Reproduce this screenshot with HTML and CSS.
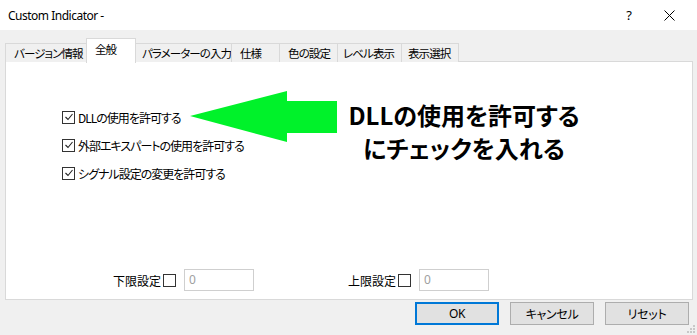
FILE: index.html
```html
<!DOCTYPE html>
<html lang="ja">
<head>
<meta charset="UTF-8">
<meta name="viewport" content="width=device-width, initial-scale=1.0">
<title>Custom Indicator</title>
<link rel="stylesheet" href="styles.css">
</head>
<body>
<div class="window">
  <header class="titlebar">
    <span class="title">Custom Indicator -</span>
    <span class="help">?</span>
    <span class="close">
      <svg width="11" height="11" viewBox="0 0 11 11"><path d="M0.5 0.5 L10.5 10.5 M10.5 0.5 L0.5 10.5" stroke="#000" stroke-width="1" fill="none"/></svg>
    </span>
  </header>

  <nav class="tabs">
    <div class="tab">バージョン情報</div>
    <div class="tab active">全般</div>
    <div class="tab">パラメーターの入力</div>
    <div class="tab">仕様</div>
    <div class="tab">色の設定</div>
    <div class="tab">レベル表示</div>
    <div class="tab">表示選択</div>
  </nav>

  <section class="panel">
    <div class="options">
      <label class="option"><span class="box checked"><svg width="10" height="10" viewBox="0 0 10 10"><path d="M1.5 5 L4 7.5 L8.5 2" stroke="#222" stroke-width="1.1" fill="none"/></svg></span>DLLの使用を許可する</label>
      <label class="option"><span class="box checked"><svg width="10" height="10" viewBox="0 0 10 10"><path d="M1.5 5 L4 7.5 L8.5 2" stroke="#222" stroke-width="1.1" fill="none"/></svg></span>外部エキスパートの使用を許可する</label>
      <label class="option"><span class="box checked"><svg width="10" height="10" viewBox="0 0 10 10"><path d="M1.5 5 L4 7.5 L8.5 2" stroke="#222" stroke-width="1.1" fill="none"/></svg></span>シグナル設定の変更を許可する</label>
    </div>

    <div class="limits">
      <div class="limit">
        <span class="limit-label">下限設定</span><span class="box"></span>
        <div class="field">0</div>
      </div>
      <div class="limit">
        <span class="limit-label">上限設定</span><span class="box"></span>
        <div class="field">0</div>
      </div>
    </div>

    <!-- annotation drawn over the dialog -->
    <svg class="arrow" width="148" height="52" viewBox="0 0 148 52">
      <polygon points="0,25 97,0 97,10 147,10 147,42 97,42 97,51" fill="#00f22a"/>
    </svg>
    <div class="note">DLLの使用を許可する<br>にチェックを入れる</div>
  </section>

  <footer class="buttons">
    <button class="btn default">OK</button>
    <button class="btn">キャンセル</button>
    <button class="btn">リセット</button>
  </footer>

  <svg class="grip" width="8" height="8" viewBox="0 0 8 8">
    <rect x="6" y="0" width="2" height="2" fill="#c8c8c8"/>
    <rect x="3" y="3" width="2" height="2" fill="#c8c8c8"/>
    <rect x="6" y="3" width="2" height="2" fill="#c8c8c8"/>
    <rect x="0" y="6" width="2" height="2" fill="#c8c8c8"/>
    <rect x="3" y="6" width="2" height="2" fill="#c8c8c8"/>
    <rect x="6" y="6" width="2" height="2" fill="#c8c8c8"/>
  </svg>
</div>
</body>
</html>
```

FILE: styles.css
```css
body, html {
  margin: 0;
  padding: 0;
  background: #f0f0f0;
  font-family: "Noto Sans", "Noto Sans CJK JP", sans-serif;
  font-size: 12px;
  color: #000;
}
.window {
  width: 697px;
  height: 335px;
  position: relative;
  overflow: hidden;
}
.titlebar {
  height: 30px;
  background: #fff;
  display: flex;
  align-items: center;
  padding-left: 8px;
}
.title {
  flex: 1;
  font-size: 12px;
  letter-spacing: -0.5px;
}
.help {
  font-size: 13px;
  width: 32px;
  text-align: center;
  margin-right: 1px;
}
.close {
  width: 46px;
  display: flex;
  justify-content: center;
  margin-right: 5px;
}
.tabs {
  display: flex;
  align-items: flex-end;
  height: 24px;
  margin-top: 8px;
  padding-left: 5px;
  font-family: "Noto Sans CJK JP", sans-serif;
  font-feature-settings: "palt";
  font-size: 11.5px;
  letter-spacing: -0.9px;
  white-space: nowrap;
  position: relative;
  z-index: 1;
}
.tab {
  height: 19px;
  line-height: 18px;
  padding: 0 0 0 7px;
  border: 1px solid #d9d9d9;
  border-bottom: none;
  border-right: none;
  background: #f0f0f0;
  box-sizing: border-box;
}
.tab:nth-child(1) { width: 81px; padding-left: 8px; }
.tab:nth-child(2) { width: 50px; }
.tab:nth-child(3) { width: 96px; padding-left: 6px; }
.tab:nth-child(4) { width: 48px; padding-left: 8px; }
.tab:nth-child(5) { width: 58px; padding-left: 8px; }
.tab:nth-child(6) { width: 64px; padding-left: 5px; }
.tab:nth-child(7) { width: 58px; padding-left: 6px; border-right: 1px solid #d9d9d9; }
.tab.active {
  height: 25px;
  line-height: 20px;
  background: #fff;
  border-right: 1px solid #d9d9d9;
  margin-right: -1px;
  padding-left: 8px;
  margin-bottom: -1px;
}
.panel {
  position: relative;
  height: 239px;
  margin: -1px 4px 0 5px;
  background: #fff;
  border: 1px solid #d9d9d9;
  box-sizing: border-box;
  display: flex;
  flex-direction: column;
  font-family: "Noto Sans CJK JP", sans-serif;
  font-feature-settings: "palt";
}
.options {
  display: flex;
  flex-direction: column;
  gap: 10px;
  padding: 46px 0 0 56px;
}
.option {
  display: flex;
  align-items: center;
  height: 18px;
  gap: 3px;
  letter-spacing: -1px;
}
.box {
  width: 11px;
  height: 11px;
  border: 1px solid #333;
  display: inline-flex;
  align-items: center;
  justify-content: center;
  background: #fff;
  flex: none;
}
.limits {
  margin-top: auto;
  margin-bottom: 8px;
  display: flex;
  padding-left: 107px;
  gap: 94px;
}
.limit {
  display: flex;
  align-items: center;
}
.limit-label {
  margin-right: 2px;
}
.field {
  width: 70px;
  height: 22px;
  box-sizing: border-box;
  border: 1px solid #cfcfcf;
  margin-left: 8px;
  padding-left: 4px;
  line-height: 20px;
  color: #a0a0a0;
  font-family: "Noto Sans", sans-serif;
}
.arrow {
  position: absolute;
  left: 184px;
  top: 29px;
}
.note {
  position: absolute;
  left: 316px;
  top: 36px;
  width: 284px;
  text-align: center;
  font-size: 24px;
  font-weight: bold;
  line-height: 33px;
  letter-spacing: 0;
}
.buttons {
  display: flex;
  justify-content: flex-end;
  gap: 11px;
  padding: 2px 8px 0 0;
}
.btn {
  width: 84px;
  height: 23px;
  background: #e1e1e1;
  border: 1px solid #adadad;
  font-family: "Noto Sans", "Noto Sans CJK JP", sans-serif;
  font-feature-settings: "palt";
  font-size: 12px;
  letter-spacing: -0.3px;
  padding: 0;
}
.btn.default {
  border: 2px solid #0078d7;
}
.grip {
  position: absolute;
  right: 2px;
  bottom: 2px;
}
```
